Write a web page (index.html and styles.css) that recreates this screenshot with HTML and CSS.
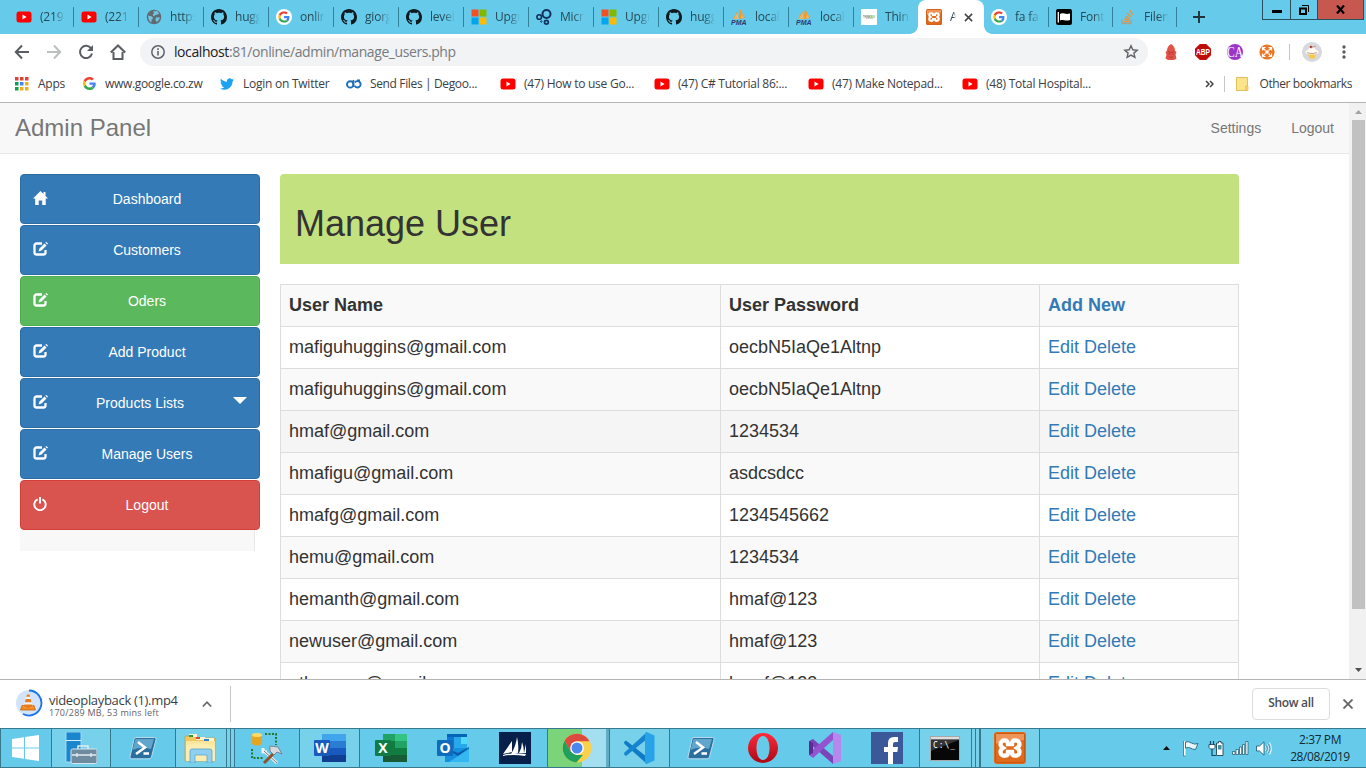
FILE: index.html
```html
<!DOCTYPE html>
<html lang="en">
<head>
<meta charset="utf-8">
<title>Admin Panel</title>
<link rel="stylesheet" href="styles.css">
</head>
<body>
<svg class="defs" width="0" height="0" aria-hidden="true">
  <symbol id="youtube" viewBox="0 0 16 16"><rect x="0.5" y="2.5" width="15" height="11" rx="2.5" fill="#f00"/><path d="M6.5 5.6v4.8L10.6 8z" fill="#fff"/></symbol>
  <symbol id="github" viewBox="0 0 16 16"><path fill="#0d1a20" fill-rule="evenodd" d="M8 0C3.58 0 0 3.58 0 8c0 3.54 2.29 6.53 5.47 7.59.4.07.55-.17.55-.38 0-.19-.01-.82-.01-1.49-2.01.37-2.53-.49-2.69-.94-.09-.23-.48-.94-.82-1.13-.28-.15-.68-.52-.01-.53.63-.01 1.08.58 1.23.82.72 1.21 1.87.87 2.33.66.07-.52.28-.87.51-1.07-1.78-.2-3.64-.89-3.64-3.95 0-.87.31-1.59.82-2.15-.08-.2-.36-1.02.08-2.12 0 0 .67-.21 2.2.82.64-.18 1.32-.27 2-.27s1.36.09 2 .27c1.53-1.04 2.2-.82 2.2-.82.44 1.1.16 1.92.08 2.12.51.56.82 1.27.82 2.15 0 3.07-1.87 3.75-3.65 3.95.29.25.54.73.54 1.48 0 1.07-.01 1.93-.01 2.2 0 .21.15.46.55.38A8.01 8.01 0 0 0 16 8c0-4.42-3.58-8-8-8z"/></symbol>
  <symbol id="google" viewBox="0 0 48 48"><path fill="#EA4335" d="M24 9.5c3.54 0 6.71 1.22 9.21 3.6l6.85-6.85C35.9 2.38 30.47 0 24 0 14.62 0 6.51 5.38 2.56 13.22l7.98 6.19C12.43 13.72 17.74 9.5 24 9.5z"/><path fill="#4285F4" d="M46.98 24.55c0-1.57-.15-3.09-.38-4.55H24v9.02h12.94c-.58 2.96-2.26 5.48-4.78 7.18l7.73 6c4.51-4.18 7.09-10.36 7.09-17.65z"/><path fill="#FBBC05" d="M10.53 28.59a14.5 14.5 0 0 1 0-9.18l-7.98-6.19a24 24 0 0 0 0 21.56l7.98-6.19z"/><path fill="#34A853" d="M24 48c6.48 0 11.93-2.13 15.89-5.81l-7.73-6c-2.15 1.45-4.92 2.3-8.16 2.3-6.26 0-11.57-4.22-13.47-9.91l-7.98 6.19C6.51 42.62 14.62 48 24 48z"/></symbol>
  <symbol id="google-disc" viewBox="0 0 16 16"><circle cx="8" cy="8" r="8" fill="#fff"/><use href="#google" x="2.2" y="2.2" width="11.6" height="11.6"/></symbol>
  <symbol id="globe" viewBox="0 0 16 16"><circle cx="8" cy="8" r="7.3" fill="#5f6b73"/><path d="M2.2 6.5 6 7.6l1.2 1.8-1.8 1.4.2 2.7C3.2 12.600 1.800 9.500 2.200 6.500zM7 2.200l4-.2 2.300 2.400-1.600 1.200-2 .1-1.800 1.700-1.300-1.600L8.200 4zM10 8.400l3.800-.2c-.2 2-1.300 3.700-3 4.700l-1.500-2z" fill="#76c3dd"/></symbol>
  <symbol id="microsoft" viewBox="0 0 16 16"><path d="M.5.500h7v7h-7z" fill="#f25022"/><path d="M8.500.500h7v7h-7z" fill="#7fba00"/><path d="M.5 8.500h7v7h-7z" fill="#00a4ef"/><path d="M8.500 8.500h7v7h-7z" fill="#ffb900"/></symbol>
  <symbol id="rings" viewBox="0 0 16 16"><g fill="none" stroke="#13315c"><circle cx="10.500" cy="5" r="4" stroke-width="2"/><circle cx="3.200" cy="8" r="2.300" stroke-width="1.600"/><circle cx="10.400" cy="13.200" r="1.900" stroke-width="1.700"/><circle cx="5.300" cy="12.500" r=".7"/></g></symbol>
  <symbol id="pma" viewBox="0 0 16 16"><path d="M2 10 6.500 2 7 9zM7.500 10 9 0l5 9z" fill="#f49a2c"/><path d="M3 10 5 6l2-2 .5 6zM10 9l1-4 2 4z" fill="#e5b872"/><text x="0" y="15.500" textLength="15.500" lengthAdjust="spacingAndGlyphs" class="pma-text">PMA</text></symbol>
  <symbol id="think" viewBox="0 0 16 16"><path d="M0 0h16v16H0z" fill="#fff"/><text x="2" y="8.500" textLength="12" lengthAdjust="spacingAndGlyphs" class="think-text">THINK<tspan fill="#72b840">BIG</tspan></text><path d="M5 9.500h7" stroke="#bbb" stroke-width=".7"/></symbol>
  <symbol id="xampp" viewBox="0 0 32 32"><rect width="32" height="32" rx="3" fill="#de6a1e"/><rect x="1.500" y="1.500" width="29" height="29" rx="2" fill="none" stroke="#c9590f"/><path d="M2 2h28v6c-7 1-21 1-28 4z" fill="#ee965a"/><path d="M11 8.500c-2.500-.5-4.500 1.500-4.500 3.500 0 2 1 3 2.500 4-1.500 1-2.500 2.200-2.500 4 0 2.500 2 4 4.500 3.700 2 0 3-1.500 3-3.700h4c0 2.200 1 3.700 3 3.700 2.500.3 4.500-1.200 4.500-3.700 0-1.800-1-3-2.500-4 1.500-1 2.500-2 2.500-4 0-2-2-4-4.500-3.500-2 0-3 1.500-3 3.500h-4c0-2-1-3.500-3-3.500z" fill="none" stroke="#fff" stroke-width="4.300"/></symbol>
  <symbol id="flagfav" viewBox="0 0 16 16"><rect width="16" height="16" rx="2" fill="#000"/><path d="M2.300 3v10.500" stroke="#fff" stroke-width="1.300"/><path d="M4 5c3-2 5 1 10-.5V11c-5 1.500-7-1-10 .5z" fill="#fff"/></symbol>
  <symbol id="stack" viewBox="0 0 16 16"><path d="M2 10.500v4h9v-4" fill="none" stroke="#a5a18d" stroke-width="1.300"/><path d="M4 12.500h5.500M4.200 10l5.300.8M5 7.200l5 2.200M6.800 4l4.200 3.700M9.800 1.200l2.800 4.600" stroke="#e39446" stroke-width="1.400"/></symbol>
  <symbol id="twitter" viewBox="0 0 24 24"><path fill="#1da1f2" d="M23.950 4.570a10 10 0 0 1-2.820.77 4.960 4.960 0 0 0 2.160-2.720c-.95.55-2 .95-3.130 1.180a4.920 4.920 0 0 0-8.380 4.480C7.690 8.090 4.070 6.130 1.640 3.160a4.820 4.820 0 0 0-.67 2.480c0 1.710.87 3.210 2.190 4.090a4.900 4.900 0 0 1-2.230-.61v.06a4.920 4.920 0 0 0 3.950 4.830 5 5 0 0 1-2.210.08 4.940 4.940 0 0 0 4.600 3.420A9.870 9.870 0 0 1 0 19.540a14 14 0 0 0 7.550 2.210c9.050 0 14-7.500 14-13.980 0-.21 0-.42-.02-.63a9.940 9.940 0 0 0 2.420-2.570z"/></symbol>
  <symbol id="degoo" viewBox="0 0 16 16"><circle cx="4.200" cy="8.400" r="3.200" fill="none" stroke="#1f6fb8" stroke-width="1.900"/><path d="M7.400 4v5a3 3 0 0 0 .6 1.800" fill="none" stroke="#1f6fb8" stroke-width="1.700"/><path d="M8.800 6.400A3.200 3.200 0 1 1 8.600 9.800" fill="none" stroke="#1f6fb8" stroke-width="1.900"/><path d="M11 4.200h3" stroke="#1f6fb8" stroke-width="1.500"/></symbol>
  <symbol id="edit" viewBox="0 0 15 14"><path d="M9 1.500H3.500a2 2 0 0 0-2 2V10.500a2 2 0 0 0 2 2h7a2 2 0 0 0 2-2V8" fill="none" stroke="#fff" stroke-width="2.300"/><path d="M5.500 9.500 6.500 6.500 11.500 1.500 13.500 3.500 8.500 8.500z" fill="#fff"/><path d="M12.300.800 13.300 0 15 1.600 14.200 2.600z" fill="#fff"/></symbol>
  <symbol id="powershell" viewBox="0 0 28 24"><path d="M7 1.500h18.500q2 0 1.500 2L22.500 21q-.5 1.800-2.500 1.800H2.500q-2 0-1.500-2L5 3.200Q5.400 1.500 7 1.500z" fill="#2c6f9f" stroke="#b9dced"/><path d="M6.500 3H25L22 13Q12 10 3.500 14z" fill="#5fa5cc"/><path d="m9 6 7 5.500-9 6.500M14.500 17.500H20" fill="none" stroke="#fff" stroke-width="2.500"/></symbol>
</svg>

<div class="screen">
  <header class="tabs">
    <div class="tab"><svg class="fav"><use href="#youtube"/></svg><span>(219)</span></div>
    <div class="tab"><svg class="fav"><use href="#youtube"/></svg><span>(221)</span></div>
    <div class="tab"><svg class="fav"><use href="#globe"/></svg><span>https:</span></div>
    <div class="tab"><svg class="fav"><use href="#github"/></svg><span>huggi</span></div>
    <div class="tab"><svg class="fav"><use href="#google-disc"/></svg><span>online</span></div>
    <div class="tab"><svg class="fav"><use href="#github"/></svg><span>giorgi</span></div>
    <div class="tab"><svg class="fav"><use href="#github"/></svg><span>level</span></div>
    <div class="tab"><svg class="fav"><use href="#microsoft"/></svg><span>Upgra</span></div>
    <div class="tab"><svg class="fav"><use href="#rings"/></svg><span>Micro</span></div>
    <div class="tab"><svg class="fav"><use href="#microsoft"/></svg><span>Upgra</span></div>
    <div class="tab"><svg class="fav"><use href="#github"/></svg><span>huggi</span></div>
    <div class="tab"><svg class="fav"><use href="#pma"/></svg><span>local</span></div>
    <div class="tab"><svg class="fav"><use href="#pma"/></svg><span>local</span></div>
    <div class="tab last"><svg class="fav"><use href="#think"/></svg><span>Think</span></div>
    <div class="tab active"><svg class="fav"><use href="#xampp"/></svg><span>A</span><svg class="close" viewBox="0 0 10 10"><path d="m1 1 8 8M9 1 1 9" stroke="#444" stroke-width="1.700"/></svg></div>
    <div class="tab small"><svg class="fav"><use href="#google-disc"/></svg><span>fa fa</span></div>
    <div class="tab small"><svg class="fav"><use href="#flagfav"/></svg><span>Font</span></div>
    <div class="tab small"><svg class="fav"><use href="#stack"/></svg><span>Filen</span></div>
    <svg class="plus" viewBox="0 0 12 12"><path d="M6 0v12M0 6h12" stroke="#21343c" stroke-width="1.900"/></svg>
    <div class="window-buttons">
      <div class="wb min"><svg width="10" height="3"><path d="M0 0h10v3H0z"/></svg></div>
      <div class="wb max"><svg width="10" height="10" fill="none" stroke="#000"><path d="M1 3.500h6v5.500H1z" stroke-width="2"/><path d="M3 .5h6.500v6.500" stroke-width="1"/></svg></div>
      <div class="wb exit"><svg width="9" height="9" viewBox="0 0 9 9"><path d="m1 .5 7 8M8 .5 1 8.500" stroke="#000" stroke-width="2.200"/></svg></div>
    </div>
  </header>

  <div class="toolbar">
    <svg class="nav-icon" viewBox="0 0 16 16"><path d="M15 8H2M8 1.500 1.800 8 8 14.500" fill="none" stroke="#5a5d61" stroke-width="2"/></svg>
    <svg class="nav-icon" viewBox="0 0 16 16"><path d="M1 8h13M8 1.500 14.200 8 8 14.500" fill="none" stroke="#bcbec0" stroke-width="2"/></svg>
    <svg class="nav-icon" viewBox="0 0 16 16"><path d="M13.200 4.600A6.100 6.100 0 1 0 14 9.500" fill="none" stroke="#5a5d61" stroke-width="2"/><path d="M15 1v6H9z" fill="#5a5d61"/></svg>
    <svg class="nav-icon" viewBox="0 0 16 16"><path d="M3.500 8v7h9V8M.8 8.500 8 1.500l7.200 7" fill="none" stroke="#5a5d61" stroke-width="2"/></svg>
    <div class="omnibox">
      <svg width="14" height="14" viewBox="0 0 14 14"><circle cx="7" cy="7" r="6.200" fill="none" stroke="#5f6368" stroke-width="1.500"/><path d="M7 6v4.500M7 3.300v1.600" stroke="#5f6368" stroke-width="1.600"/></svg>
      <span class="url"><b>localhost</b>:81/online/admin/manage_users.php</span>
      <svg class="star" width="16" height="16" viewBox="0 0 16 16"><path d="m8 1.800 1.800 4 4.400.4-3.300 2.900 1 4.300L8 11.100l-3.900 2.300 1-4.300-3.300-2.900 4.400-.4z" fill="none" stroke="#5f6368" stroke-width="1.400"/></svg>
    </div>
    <svg class="ext" viewBox="0 0 16 16"><path d="M8 0c2.500 1.500 4 3.500 4 6.500l1.500 2-1 2 1 4-2.500 1.500H5l-2.500-1.500 1-4-1-2 1.500-2C4 3.500 5.500 1.500 8 0z" fill="#e25248"/><path d="M5 7.500q1.500 0 3 1.500 1.500-1.500 3-1.500M6 12.800q2 1.500 4 0M5.300 10h1.700M9 10h1.700" fill="none" stroke="#a03a34" stroke-width=".9"/></svg>
    <svg class="ext" viewBox="0 0 16 16"><path d="M4.800 0h6.400L16 4.800v6.400L11.200 16H4.800L0 11.200V4.800z" fill="#c00b0b"/><text x="1" y="11" textLength="14" lengthAdjust="spacingAndGlyphs" class="abp-text">ABP</text></svg>
    <svg class="ext" viewBox="0 0 16 16"><circle cx="8" cy="8" r="8" fill="#9b35c8"/><text x="0" y="12.700" textLength="16" lengthAdjust="spacingAndGlyphs" class="ca-text">CA</text></svg>
    <svg class="ext" viewBox="0 0 16 16"><circle cx="8" cy="8" r="7.600" fill="#ee7623"/><g fill="none" stroke="#fff" stroke-width="1.200"><path d="M3.500 6.500v-3h3M9.500 3.500h3v3M12.500 9.500v3h-3M6.500 12.500h-3v-3M4 4l2.500 2.500M12 4 9.500 6.500M12 12 9.500 9.500M4 12l2.500-2.500"/></g><circle cx="8" cy="8" r="1.800" fill="#fff"/></svg>
    <i class="rule"></i>
    <svg class="avatar" viewBox="0 0 20 20"><circle cx="10" cy="10" r="10" fill="#d8d9dc"/><path d="M6 12h8l-1.500 4.500h-5z" fill="#f4ca48"/><path d="M3.500 10.500Q3 8 6 8q1-3 4-3t4 3q3 0 2.500 2.500Q16 12.500 10 12.500t-6.500-2z" fill="#fffaf2"/><circle cx="9" cy="5" r="1.300" fill="#a6372b"/><path d="M9 5.500 14 4M5 10.700q5 2 10 0" fill="none" stroke="#b08a76" stroke-width=".8"/></svg>
    <svg class="dots" width="4" height="14" fill="#5a5d61"><circle cx="2" cy="2" r="1.700"/><circle cx="2" cy="7" r="1.700"/><circle cx="2" cy="12" r="1.700"/></svg>
  </div>

  <nav class="bookmarks">
    <span class="bm apps"><svg width="14" height="14"><path d="M0 0h3.500v3.500H0zM5 0h3.500v3.500H5zM10 0h3.500v3.500H10z" fill="#db4437"/><path d="M0 5h3.500v3.500H0z" fill="#0f9d58"/><path d="M5 5h3.500v3.500H5z" fill="#4285f4"/><path d="M10 5h3.500v3.500H10z" fill="#e8b321"/><path d="M0 10h3.500v3.500H0z" fill="#0f9d58"/><path d="M5 10h3.500v3.500H5zM10 10h3.500v3.500H10z" fill="#e8b321"/></svg><span>Apps</span></span>
    <span class="bm goog"><svg width="13" height="13"><use href="#google"/></svg><span>www.google.co.zw</span></span>
    <span class="bm tw"><svg width="14" height="14"><use href="#twitter"/></svg><span>Login on Twitter</span></span>
    <span class="bm deg"><svg width="16" height="16"><use href="#degoo"/></svg><span>Send Files | Degoo...</span></span>
    <span class="bm yt"><svg width="16" height="16"><use href="#youtube"/></svg><span>(47) How to use Go...</span></span>
    <span class="bm yt"><svg width="16" height="16"><use href="#youtube"/></svg><span>(47) C# Tutorial 86:...</span></span>
    <span class="bm yt"><svg width="16" height="16"><use href="#youtube"/></svg><span>(47) Make Notepad...</span></span>
    <span class="bm yt"><svg width="16" height="16"><use href="#youtube"/></svg><span>(48) Total Hospital...</span></span>
    <svg class="more" width="9" height="8"><path d="m1 1 3 3-3 3M5 1l3 3-3 3" fill="none" stroke="#444" stroke-width="1.500"/></svg>
    <i class="rule"></i>
    <svg class="folder" width="13" height="14"><path d="M.5.500h11v13H.5z" fill="#fce48a" stroke="#dcc05a"/><path d="M9.500 9h2.500v4.500H9.500z" fill="#f7d560" stroke="#dcc05a" stroke-width=".7"/></svg>
    <span class="other">Other bookmarks</span>
  </nav>

  <div class="viewport">
    <div class="page">
      <nav class="navbar"><a class="brand">Admin Panel</a><a>Settings</a><a>Logout</a></nav>
      <div class="columns">
        <aside class="sidebar">
          <a class="btn"><svg class="gi" viewBox="0 0 15 14"><path d="M7.500 0 0 7.500h2.200V14h3.500V9.500h3.500V14h3.500V7.500H15l-2.500-2.500V1h-2v2z" fill="#fff"/></svg><span>Dashboard</span></a>
          <a class="btn"><svg class="gi"><use href="#edit"/></svg><span>Customers</span></a>
          <a class="btn green"><svg class="gi"><use href="#edit"/></svg><span>Oders</span></a>
          <a class="btn"><svg class="gi"><use href="#edit"/></svg><span>Add Product</span></a>
          <a class="btn"><svg class="gi"><use href="#edit"/></svg><span>Products Lists</span><svg class="caret" viewBox="0 0 14 7"><path d="M0 0h14L7 7z" fill="#fff"/></svg></a>
          <a class="btn"><svg class="gi"><use href="#edit"/></svg><span>Manage Users</span></a>
          <a class="btn red"><svg class="gi" viewBox="0 0 15 14"><path d="M4.600 2.300a5.700 5.700 0 1 0 4.800 0" fill="none" stroke="#fff" stroke-width="1.900"/><path d="M7 0v6.500" stroke="#fff" stroke-width="2"/></svg><span>Logout</span></a>
          <div class="filler"></div>
        </aside>
        <main>
          <div class="banner"><h1>Manage User</h1></div>
          <table>
            <colgroup><col class="c1"><col class="c2"><col class="c3"></colgroup>
            <tr><th>User Name</th><th>User Password</th><th><a>Add New</a></th></tr>
            <tr><td>mafiguhuggins@gmail.com</td><td>oecbN5IaQe1Altnp</td><td><a>Edit</a> <a>Delete</a></td></tr>
            <tr><td>mafiguhuggins@gmail.com</td><td>oecbN5IaQe1Altnp</td><td><a>Edit</a> <a>Delete</a></td></tr>
            <tr class="hover"><td>hmaf@gmail.com</td><td>1234534</td><td><a>Edit</a> <a>Delete</a></td></tr>
            <tr><td>hmafigu@gmail.com</td><td>asdcsdcc</td><td><a>Edit</a> <a>Delete</a></td></tr>
            <tr><td>hmafg@gmail.com</td><td>1234545662</td><td><a>Edit</a> <a>Delete</a></td></tr>
            <tr><td>hemu@gmail.com</td><td>1234534</td><td><a>Edit</a> <a>Delete</a></td></tr>
            <tr><td>hemanth@gmail.com</td><td>hmaf@123</td><td><a>Edit</a> <a>Delete</a></td></tr>
            <tr><td>newuser@gmail.com</td><td>hmaf@123</td><td><a>Edit</a> <a>Delete</a></td></tr>
            <tr><td>otheruser@gmail.com</td><td>hmaf@123</td><td><a>Edit</a> <a>Delete</a></td></tr>
          </table>
        </main>
      </div>
    </div>
    <div class="scrollbar">
      <svg width="7" height="4"><path d="M0 4 3.500 0 7 4z" fill="#a3a3a3"/></svg>
      <div class="thumb"></div>
      <svg width="7" height="4"><path d="M0 0h7L3.500 4z" fill="#505050"/></svg>
    </div>
  </div>

  <div class="downloads">
    <svg class="vlc" viewBox="0 0 28 28"><circle cx="14" cy="14" r="13" fill="#d2e3fc"/><path d="M14 1.500A12.500 12.500 0 1 1 8 25" fill="none" stroke="#1a73e8" stroke-width="1.800"/><path d="M5.500 21 7 16.500h12l1.500 4.500z" fill="#f28a22" stroke="#c9660f" stroke-width=".8"/><path d="M12 5.500h2.500L18 18q-4.700 2-9.500 0z" fill="#f4f4f4"/><path d="M12 5.500h2.500l.6 2.300h-3.700zM10.800 10l-.9 3.200h6.600l-.9-3.200zM9.300 15.500l-.7 2.500q4.700 2 9.400 0l-.8-2.500z" fill="#ea7a18"/></svg>
    <div class="file"><span class="name">videoplayback (1).mp4</span><span class="stat">170/289 MB, 53 mins left</span></div>
    <svg class="up" width="10" height="6"><path d="m.8 5.500 4.200-4.300 4.200 4.300" fill="none" stroke="#666" stroke-width="1.600"/></svg>
    <i class="rule"></i>
    <button class="show">Show all</button>
    <svg class="dl-close" width="10" height="10"><path d="m.5.500 9 9M9.500.500l-9 9" stroke="#666" stroke-width="1.900"/></svg>
  </div>

  <footer class="taskbar">
    <div class="cell start"><svg width="28" height="26" viewBox="0 0 28 26" fill="#fff"><path d="M0 4 12 2.200V12.500H0zM13 2 27 0v12.500H13zM0 13.500h12v10.300L0 22zM13 13.500h14V26l-14-2z"/></svg></div>
    <div class="cell open w60"><svg width="32" height="32"><path d="M1 0h15v30H1z" fill="#1a86cd" stroke="#b7e2f3" stroke-width=".8"/><path d="M1 8.500h15" stroke="#d5eef8"/><path d="M13 17v-3h10v3" fill="none" stroke="#e3edf2" stroke-width="1.500"/><rect x="6" y="17" width="26" height="14.500" rx="1.500" fill="#6f8ba0" stroke="#d6e7ef"/><path d="M7 23h24M12 21v4M26 21v4" stroke="#e2edf3" stroke-width="1.300"/></svg></div>
    <div class="cell w64"><svg width="28" height="24"><use href="#powershell"/></svg></div>
    <div class="cell open stacked w60"><svg width="33" height="30" viewBox="0 0 33 30"><path d="M1 28V3h9l2 2h19v23z" fill="#efc95e" stroke="#c5993a" stroke-width=".7"/><path d="M2 8h29v20H2z" fill="#f9e69c"/><path d="M5 1h8v3H5zM12 4h9v3h-9zM20 5h10v3H20z" fill="#fff6c9"/><path d="M5 2h4v2H5z" fill="#2a9a45"/><path d="M12 4h4v2h-4z" fill="#de4934"/><path d="M20 6h5v2h-5z" fill="#327fd1"/><path d="M2 12q20-4 29 2v14H2z" fill="#fbedb1"/><path d="M6 30V18q0-2 2-2h18q2 0 2 2v12h-5v-8H11v8z" fill="#91cff0" stroke="#4a9dcb" stroke-width=".7"/></svg></div>
    <div class="cell w64"><svg width="32" height="32"><path d="M1 3v9q5 3 10 0V3z" fill="#e5a520"/><ellipse cx="6" cy="3" rx="5" ry="2" fill="#ffd966"/><path d="M14 2h11v11M1 17v9h11" fill="none" stroke="#24792f" stroke-width="2" stroke-dasharray="2 1.500"/><path d="m12 18 14 13M12 16v4h4" fill="none" stroke="#eef1f2" stroke-width="3"/><path d="m13 19 13 12" stroke="#777"/><path d="M25 19 13 31" stroke="#8b5430" stroke-width="3"/><path d="m19 14 8 1 4 7-5-2-3 3-4-4z" fill="#d4dade" stroke="#667" stroke-width=".7"/></svg></div>
    <div class="cell open w61"><svg width="32" height="28"><path d="M8 0h24v7H8z" fill="#41a5ee"/><path d="M8 7h24v7H8z" fill="#2b7cd3"/><path d="M8 14h24v7H8z" fill="#185abd"/><path d="M8 21h24v7H8z" fill="#103f91"/><rect y="6" width="16" height="16" rx="1" fill="#185abd"/><text x="8" y="18.500" class="office">W</text></svg></div>
    <div class="cell w62"><svg width="32" height="28"><path d="M8 0h24v28H8z" fill="#21a366"/><path d="M20 0h12v7H20z" fill="#33c481"/><path d="M8 7h12v14H8z" fill="#107c41"/><path d="M20 14h12v7H20z" fill="#107c41"/><path d="M8 21h24v7H8z" fill="#185c37"/><rect y="6" width="16" height="16" rx="1" fill="#107c41"/><text x="8" y="18.500" class="office">X</text></svg></div>
    <div class="cell w62"><svg width="32" height="28"><path d="M10 0h20v16H10z" fill="#28a8ea"/><path d="M10 0h20v3H10z" fill="#0364b8"/><path d="M10 3h7v13h-7z" fill="#0f78d4"/><path d="M24 3h6v7h-6z" fill="#50d9ff"/><path d="M8 14l24 0v14H8z" fill="#1490df"/><path d="m8 14 13 8 11-8v-1L21 19z" fill="#0a5ca8"/><path d="M32 15 12 28h20z" fill="#35b8f1"/><rect y="6" width="16" height="16" rx="1" fill="#0f6cbd"/><text x="8" y="18.500" class="office">O</text></svg></div>
    <div class="cell dynamics w63"><svg width="32" height="32"><path d="M0 0h32v32H0z" fill="#07204a"/><path d="M4 22 13 9v11zM12 22q5-8 6-17 2 8 1 16zM20 21q3-5 3-11 2 5 2 11zM25 21l2-9v9zM4 23q10-3 23-1l-1 2q-12-2-22 0z" fill="#fff"/></svg></div>
    <div class="cell chrome w62"><svg width="30" height="30" viewBox="0 0 48 48"><circle cx="24" cy="24" r="23" fill="#fbd04b"/><path d="M4.100 12.500A23 23 0 0 1 44 13H24L14 29.500z" fill="#dd4b3e"/><path d="M4.100 12.500 14 29.500 24 35h9.500L23 47A23 23 0 0 1 4.100 12.500z" fill="#1fa15d"/><circle cx="24" cy="24" r="11" fill="#fff"/><circle cx="24" cy="24" r="8.800" fill="#4b87ef"/></svg></div>
    <div class="cell open vscode w61"><svg width="32" height="32" viewBox="0 0 32 32"><path d="M1 10 3 8.500 24 25v7L1.500 12z" fill="#0f7ac5"/><path d="M1 22.500 3 24 24 7V0L1.500 20.500z" fill="#1585cf"/><path d="m23.500 0 8 3.500v25L23.500 32 22 31V1z" fill="#28a3e8"/></svg></div>
    <div class="cell w62"><svg width="28" height="24"><use href="#powershell"/></svg></div>
    <div class="cell w62"><svg width="30" height="30"><defs><linearGradient id="op" x2="0" y2="1"><stop stop-color="#ff2b3c"/><stop offset="1" stop-color="#aa0914"/></linearGradient></defs><path fill="url(#op)" fill-rule="evenodd" d="M15 0a15 15 0 1 0 0 30 15 15 0 0 0 0-30zm0 3c4 0 6.500 5 6.500 12S19 27 15 27s-6.500-5-6.500-12S11 3 15 3z"/></svg></div>
    <div class="cell w62"><svg width="32" height="32"><path fill="#7a45b8" fill-rule="evenodd" d="M0 9l4-2 20 17v8L0 11z"/><path d="m0 23 4 3L24 8V0L0 21z" fill="#9454cf"/><path d="M0 9l4 2v10l-4 2z" fill="#5d2b91"/><path d="m24 0 8 3v26l-8 3z" fill="#b687ec"/></svg></div>
    <div class="cell facebook w63"><svg width="32" height="32"><path d="M0 0h32v32H0z" fill="#3b5998"/><path d="M17 32V20h-4v-5h4v-4q0-6 6-6h4v5h-3q-2 0-2 2v3h5l-.7 5H22v12z" fill="#fff"/></svg></div>
    <div class="cell open stacked w61"><svg width="30" height="25"><path d="M.5.500h29v24H.5z" fill="#070707" stroke="#a8a8a8"/><path d="M1 1h28v2.500H1z" fill="#ddd"/><path d="M1 4h28L1 15z" fill="#333"/><text x="3" y="12" textLength="22" class="console">C:\_</text></svg></div>
    <div class="cell open w60"><svg width="32" height="32"><use href="#xampp"/></svg></div>
    <div class="tray">
      <svg width="7" height="4"><path d="M0 4 3.500 0 7 4z" fill="#111"/></svg>
      <svg class="flag" width="16" height="17"><path d="M1.500 1v15" stroke="#fff" stroke-width="2"/><path d="M2.500 2q3-1 6 1 3 2 6.500.5l-2.500 6q-3 0-5-1.500-2-1-5 0z" fill="#e8f6fb" stroke="#27647b" stroke-width=".9"/><path d="M.5 1v15h2" fill="none" stroke="#27647b" stroke-width=".7"/></svg>
      <svg class="plug" width="16" height="17"><path d="M2.500 1v4M5.500 1v4M4 9v6.500h4" fill="none" stroke="#17485b" stroke-width="1.200"/><path d="M1 4.500h6v3L5.500 9h-3L1 7.500z" fill="#fff" stroke="#17485b" stroke-width=".9"/><path d="M8.500 3h2V1.500h2.500V3h2v12.500H8.500z" fill="#fff" stroke="#17485b" stroke-width=".9"/><path d="M10 5h3.500v4.500H10z" fill="#4b8ca3"/></svg>
      <svg class="signal" width="17" height="14" fill="#fff" stroke="#27647b" stroke-width=".8"><path d="M.5 10.500h2.500v3H.5zM4 8.500h2.500v5H4zM7.500 6h2.200v7.500H7.500zM10.500 3.500h2.200v10h-2.200zM13.800.500h2.200v13h-2.200z"/></svg>
      <svg class="sound" width="16" height="15"><path d="M.5 5h3L8 .8v13.400L3.500 10h-3z" fill="#fff" stroke="#27647b" stroke-width=".9"/><path d="M9.500 5q1.500 2.500 0 5M11.500 3.500q3 4 0 8M13.500 1.500q3.500 6 0 12" fill="none" stroke="#e7f7fc" stroke-width="1.100"/><path d="M10.500 4.500q1.500 3 0 6M12.500 3q3 4.500 0 9" fill="none" stroke="#27647b" stroke-width=".6"/></svg>
      <div class="clock"><span>2:37 PM</span><span class="date">28/08/2019</span></div>
    </div>
  </footer>
</div>
</body>
</html>
```

FILE: styles.css
```css
* { box-sizing: border-box; }
body { margin: 0; overflow: hidden; font-family: "Open Sans", "Noto Sans", sans-serif; }
svg { display: block; flex: none; }
.defs { position: absolute; }
.screen { width: 1366px; height: 768px; display: flex; flex-direction: column; background: #fff; }
.screen > * { flex: none; }

/* Tab strip */
.tabs { height: 34px; display: flex; background: #66cbea; padding-left: 9px; }
.tab { width: 65px; height: 34px; display: flex; align-items: center; gap: 8px; padding-left: 7px; flex: none;
  background: linear-gradient(#35819a, #35819a) right 7px / 1px 20px no-repeat; }
.tab.last { background: none; width: 64px; }
.fav { width: 16px; height: 16px; }
.tab span { width: 25px; overflow: hidden; white-space: nowrap; font-size: 12px; line-height: 18px; letter-spacing: -.2px; color: #254955;
  -webkit-mask-image: linear-gradient(90deg, #000 55%, transparent); mask-image: linear-gradient(90deg, #000 55%, transparent); }
.tab.active { width: 66px; padding-left: 8px; background: #fff; border-radius: 8px 8px 0 0; position: relative; }
.tab.active::before, .tab.active::after { content: ""; position: absolute; bottom: 0; width: 8px; height: 8px; }
.tab.active::before { left: -8px; background: radial-gradient(circle at 0 0, transparent 7.5px, #fff 8px); }
.tab.active::after { right: -8px; background: radial-gradient(circle at 100% 0, transparent 7.5px, #fff 8px); }
.tab.active span { width: 6px; }
.tab.active .close { width: 9px; height: 9px; }
.tab.small { width: 64px; }
.tab.active + .small { width: 65px; }
.plus { width: 12px; height: 12px; margin: 11px 0 0 16px; }
.window-buttons { display: flex; margin-left: auto; margin-right: 2px; height: 20px; border: 1px solid #274f5e; border-top: 0; }
.wb { display: flex; align-items: center; justify-content: center; border-right: 1px solid #274f5e; }
.wb.min { width: 28px; padding-top: 4px; }
.wb.max { width: 27px; }
.wb.exit { width: 45px; background: #c75850; border: 0; }

/* Address bar */
.toolbar { height: 36px; display: flex; align-items: center; padding-left: 14px; }
.nav-icon { width: 16px; height: 16px; margin-right: 16px; }
.omnibox { height: 28px; width: 1008px; margin: 0 15px 0 -2px; padding: 0 9px 0 11px; border-radius: 14px; background: #f1f3f4; display: flex; align-items: center; gap: 9px; }
.url { font-size: 14px; letter-spacing: -.42px; color: #777b7f; line-height: 20px; }
.url b { font-weight: 400; color: #202124; }
.star { margin-left: auto; }
.ext { width: 16px; height: 16px; margin-right: 16px; }
.rule { width: 1px; background: #c4c6c8; }
.toolbar .rule { height: 16px; margin: 0 12px 0 -2px; }
.avatar { width: 20px; height: 20px; }
.dots { margin-left: 20px; }

/* Bookmarks */
.bookmarks { height: 33px; padding: 0 14px 5px 15px; border-bottom: 1px solid #b4b4b4; display: flex; align-items: center; font-size: 12px; color: #3c4043; white-space: nowrap; }
.bm { display: flex; align-items: center; flex: none; letter-spacing: -.25px; }
.apps { width: 68px; gap: 9px; }
.goog { width: 137px; gap: 9px; letter-spacing: -.32px; }
.tw { width: 126px; gap: 9px; }
.deg { width: 154px; gap: 8px; letter-spacing: -.36px; }
.yt { width: 154px; gap: 8px; }
.more { margin-left: 89px; }
.bookmarks .rule { height: 16px; margin: 0 12px 0 10px; }
.other { margin-left: 10px; letter-spacing: -.4px; }

/* Web page */
.viewport { height: 577px; display: flex; border-bottom: 1px solid #b4b4b4; overflow: hidden; font-family: "Liberation Sans", Arial, sans-serif; font-size: 14px; }
.page { width: 1349px; overflow: hidden; }
.navbar { height: 51px; background: #f8f8f8; border-bottom: 1px solid #e7e7e7; display: flex; align-items: center; gap: 30px; padding: 0 15px; color: #777; }
.navbar .brand { font-size: 24px; margin-right: auto; }
.columns { display: flex; gap: 20px; padding: 20px; }
.sidebar { width: 240px; }
.btn { height: 50px; margin-bottom: 1px; padding: 0 12px; display: flex; align-items: center; background: #337ab7; border: 1px solid #2e6da4; border-radius: 4px; color: #fff; }
.btn span { flex: 1; text-align: center; margin-left: -1px; }
.gi { width: 15px; height: 14px; margin-top: -3px; }
.caret { width: 14px; height: 7px; margin-top: -5px; }
.green { background: #5cb85c; border-color: #4cae4c; }
.red { background: #d9534f; border-color: #d43f3a; margin-bottom: 0; }
.filler { width: 235px; height: 21px; background: #f8f8f8; border-right: 1px solid #e7e7e7; }
main { width: 959px; color: #333; }
.banner { height: 90px; background: #c4e17f; border-radius: 4px 4px 0 0; padding: 30px 15px 0; }
h1 { margin: 0; font-size: 36px; font-weight: 400; line-height: 40px; }
table { width: 959px; margin-top: 20px; border-collapse: collapse; table-layout: fixed; font-size: 18px; }
.c1 { width: 440px; }
.c2 { width: 319px; }
td, th { height: 42px; padding: 0 8px; border: 1px solid #ddd; text-align: left; line-height: 25px; }
tr:nth-child(odd) { background: #f9f9f9; }
tr.hover { background: #f5f5f5; }
table a { color: #337ab7; }
.scrollbar { width: 17px; background: #f1f1f1; display: flex; flex-direction: column; align-items: center; padding: 7px 0 7px 1px; }
.thumb { width: 13px; height: 489px; background: #c1c1c1; margin: 6px 0 auto; }

/* Download shelf */
.downloads { height: 48px; display: flex; align-items: center; padding: 0 13px 0 15px; }
.vlc { width: 28px; height: 28px; margin-top: -2px; }
.file { width: 131px; margin: 4px 0 0 6px; display: flex; flex-direction: column; white-space: nowrap; }
.name { font-size: 13px; line-height: 14px; letter-spacing: -.32px; color: #3c4043; }
.stat { font-size: 9px; line-height: 12px; letter-spacing: .25px; color: #5f6368; }
.up { margin-left: 22px; }
.downloads .rule { height: 36px; margin-left: 18px; }
.show { margin-left: auto; width: 78px; height: 32px; padding: 0 0 3px; border: 1px solid #dadce0; border-radius: 4px; background: #fff; font: 600 12px "Open Sans", sans-serif; letter-spacing: -.3px; color: #4b4e53; }
.dl-close { margin-left: 13px; }

/* Taskbar */
.taskbar { height: 40px; background: #66cbea; border: 1px solid #39798e; border-right: 0; display: flex; }
.cell { height: 38px; display: flex; align-items: center; justify-content: center; flex: none; }
.open { background: #78d1ea; border: solid #39798e; border-width: 0 1px; }
.start { width: 50px; }
.w60 { width: 60px; }
.w61 { width: 61px; }
.w62 { width: 62px; }
.w63 { width: 63px; }
.w64 { width: 64px; }
.dynamics, .facebook { padding-right: 2px; }
.vscode { padding-right: 2px; }
.stacked { padding-right: 9px; background: linear-gradient(#39798e, #39798e) right 7px top / 1px 100% no-repeat, linear-gradient(#39798e, #39798e) right 3px top / 1px 100% no-repeat, #78d1ea; }
.chrome { background: linear-gradient(90deg, #7bd47a 34px, #a3dff1 34px); border: solid #39798e; border-width: 0 3px 0 1px; border-right-color: #62adc4; }
.office { font: 700 14px "Open Sans", sans-serif; fill: #fff; text-anchor: middle; }
.console { font: 8px "DejaVu Sans Mono", monospace; fill: #fff; }
.pma-text { font: italic 700 6.5px "Liberation Sans", sans-serif; fill: #2c3a70; }
.think-text { font: 700 3.5px "Liberation Sans", sans-serif; fill: #777; }
.abp-text { font: 700 8.5px "Liberation Sans", sans-serif; fill: #fff; }
.ca-text { font: 14px "Liberation Serif", serif; fill: #fff; }
.tray { margin-left: auto; width: 203px; display: flex; align-items: center; }
.flag { margin-left: 13px; }
.plug { margin-left: 9px; }
.signal { margin-left: 8px; }
.sound { margin-left: 7px; }
.clock { width: 70px; margin-left: 13px; display: flex; flex-direction: column; align-items: center; font-size: 12px; line-height: 17px; letter-spacing: -.4px; color: #102a33; white-space: nowrap; }
```
